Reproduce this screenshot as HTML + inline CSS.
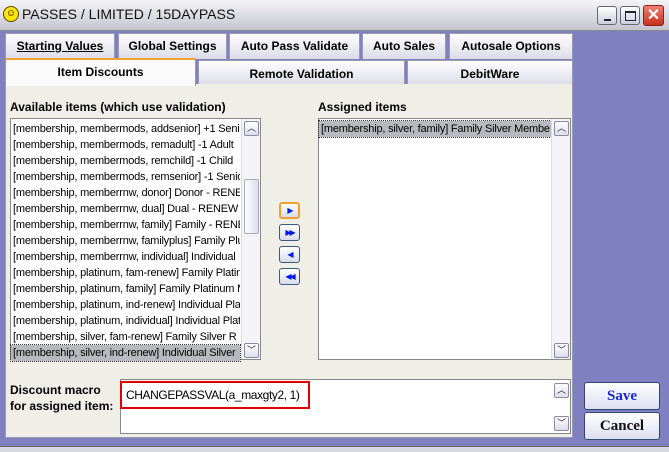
<!DOCTYPE html>
<html><head><style>
*{margin:0;padding:0;box-sizing:border-box}
body{width:669px;height:452px;overflow:hidden;background:#8080c0;font-family:"Liberation Sans",sans-serif;position:relative}
.abs{position:absolute}
.title{left:0;top:0;width:669px;height:31px;background:linear-gradient(#f4f4f8,#d8d8e0 60%,#c4c4cc);border-bottom:1px solid #888}
.tab{position:absolute;background:linear-gradient(#fdfdff,#dcdce8);border:1px solid #9a9ab0;border-bottom:none;font-weight:bold;font-size:12px;text-align:center;line-height:24px;color:#000}
.list{background:#fff;border:1px solid #888}
.row{height:16px;line-height:16px;font-size:11px;letter-spacing:-0.2px;padding-left:2px;white-space:nowrap;overflow:hidden}
.sb{position:absolute;background:#f4f4f8;border-left:1px solid #ddd}
.sbtn{position:absolute;width:15px;height:15px;border:1px solid #8a8aa0;border-radius:2px;background:linear-gradient(#fff,#dde);font-size:9px;text-align:center;line-height:13px;color:#223}
.ab{position:absolute;left:279px;width:21px;height:17px;border:1px solid #3a5a80;border-radius:3px;background:linear-gradient(#fff,#d8dcea);color:#0018e0;font-size:8px;text-align:center;line-height:15px;letter-spacing:-2px}
.btn{position:absolute;left:584px;width:76px;height:28px;border:1px solid #304870;border-radius:3px;background:linear-gradient(#fff,#dcdff0);font-family:"Liberation Serif",serif;font-weight:bold;font-size:15px;text-align:center;line-height:26px}
</style></head><body>
<div class="abs title"></div>
<div class="abs" style="left:3px;top:6px;width:16px;height:16px;border-radius:50%;background:#ffe600;border:1px solid #554400;font-size:10px;line-height:13px;text-align:center;font-weight:bold">☺</div>
<div class="abs" style="left:22px;top:6px;font-size:14px;color:#111">PASSES / LIMITED / 15DAYPASS</div>
<div class="abs" style="left:597px;top:6px;width:20px;height:19px;border:1px solid #667;border-radius:3px;background:linear-gradient(#fff,#ccd)"><div style="position:absolute;left:6px;top:12px;width:7px;height:2px;background:#223"></div></div>
<div class="abs" style="left:620px;top:6px;width:20px;height:19px;border:1px solid #667;border-radius:3px;background:linear-gradient(#fff,#ccd)"><div style="position:absolute;left:4px;top:4px;width:11px;height:10px;border:1px solid #223;border-top-width:2px"></div></div>
<div class="abs" style="left:643px;top:5px;width:21px;height:21px;border:1px solid #822;border-radius:3px;background:linear-gradient(#f08070,#c83020);color:#fff;font-size:16px;line-height:19px;text-align:center;font-weight:bold">✕</div>

<div class="abs" style="left:3px;top:31px;width:573px;height:410px;background:#8080c0"></div>
<div class="tab" style="left:5px;top:33px;width:110px;height:26px"><u>Starting Values</u></div>
<div class="tab" style="left:118px;top:33px;width:109px;height:26px">Global Settings</div>
<div class="tab" style="left:229px;top:33px;width:131px;height:26px">Auto Pass Validate</div>
<div class="tab" style="left:362px;top:33px;width:84px;height:26px">Auto Sales</div>
<div class="tab" style="left:449px;top:33px;width:124px;height:26px">Autosale Options</div>
<div class="tab" style="left:198px;top:60px;width:207px;height:25px;line-height:26px">Remote Validation</div>
<div class="tab" style="left:407px;top:60px;width:166px;height:25px;line-height:26px">DebitWare</div>
<div class="abs" style="left:5px;top:84px;width:568px;height:354px;background:#efefe8;border:1px solid #9a9ab0;border-top:none"></div>
<div class="tab" style="left:5px;top:58px;width:191px;height:28px;background:#fafafa;border-top:2px solid #f0a030;line-height:24px">Item Discounts</div>

<div class="abs" style="left:10px;top:100px;font-size:12px;font-weight:bold">Available items (which use validation)</div>
<div class="abs" style="left:318px;top:100px;font-size:12px;font-weight:bold">Assigned items</div>

<div class="abs list" style="left:10px;top:118px;width:251px;height:242px;padding-top:2px">
<div style="width:229px">
<div class="row">[membership, membermods, addsenior] +1 Senior</div>
<div class="row">[membership, membermods, remadult] -1 Adult</div>
<div class="row">[membership, membermods, remchild] -1 Child</div>
<div class="row">[membership, membermods, remsenior] -1 Senior</div>
<div class="row">[membership, memberrnw, donor] Donor - RENEW</div>
<div class="row">[membership, memberrnw, dual] Dual - RENEW</div>
<div class="row">[membership, memberrnw, family] Family - RENEW</div>
<div class="row">[membership, memberrnw, familyplus] Family Plus</div>
<div class="row">[membership, memberrnw, individual] Individual</div>
<div class="row">[membership, platinum, fam-renew] Family Platinum</div>
<div class="row">[membership, platinum, family] Family Platinum M</div>
<div class="row">[membership, platinum, ind-renew] Individual Platinum</div>
<div class="row">[membership, platinum, individual] Individual Platinum</div>
<div class="row">[membership, silver, fam-renew] Family Silver R</div>
<div class="row" style="background:#b8b8c0;outline:1px dotted #333">[membership, silver, ind-renew] Individual Silver</div>
</div>
<div class="sb" style="left:230px;top:0;width:19px;height:240px">
<div class="sbtn" style="left:2px;top:2px">︿</div>
<div style="position:absolute;left:2px;top:60px;width:15px;height:55px;border:1px solid #aab;border-radius:2px;background:linear-gradient(90deg,#fff,#dde)"></div>
<div class="sbtn" style="left:2px;top:224px">﹀</div>
</div></div>

<div class="abs list" style="left:318px;top:118px;width:253px;height:242px;padding-top:2px">
<div class="row" style="width:232px;background:#b8b8c0;outline:1px dotted #333">[membership, silver, family] Family Silver Membe</div>
<div class="sb" style="left:232px;top:0;width:19px;height:240px">
<div class="sbtn" style="left:2px;top:2px">︿</div>
<div class="sbtn" style="left:2px;top:224px">﹀</div>
</div></div>

<div class="ab" style="top:202px;border-color:#f0a030;border-width:2px;line-height:13px">▶</div>
<div class="ab" style="top:224px">▶▶</div>
<div class="ab" style="top:246px">◀</div>
<div class="ab" style="top:268px">◀◀</div>

<div class="abs" style="left:10px;top:382px;font-size:12px;font-weight:bold;line-height:16px">Discount macro<br>for assigned item:</div>
<div class="abs list" style="left:120px;top:379px;width:451px;height:55px">
<div class="sbtn" style="left:433px;top:3px">︿</div>
<div class="sbtn" style="left:433px;top:36px">﹀</div>
</div>
<div class="abs" style="left:120px;top:381px;width:190px;height:28px;border:2px solid #e00000;font-size:12px;letter-spacing:-0.4px;white-space:nowrap;padding:5px 0 0 4px">CHANGEPASSVAL(a_maxgty2, 1)</div>

<div class="btn" style="top:382px;color:#1428d0">Save</div>
<div class="btn" style="top:412px;color:#111">Cancel</div>
<div class="abs" style="left:0;top:446px;width:669px;height:6px;background:#d8d8e0;border-top:1px solid #666"></div>
</body></html>
